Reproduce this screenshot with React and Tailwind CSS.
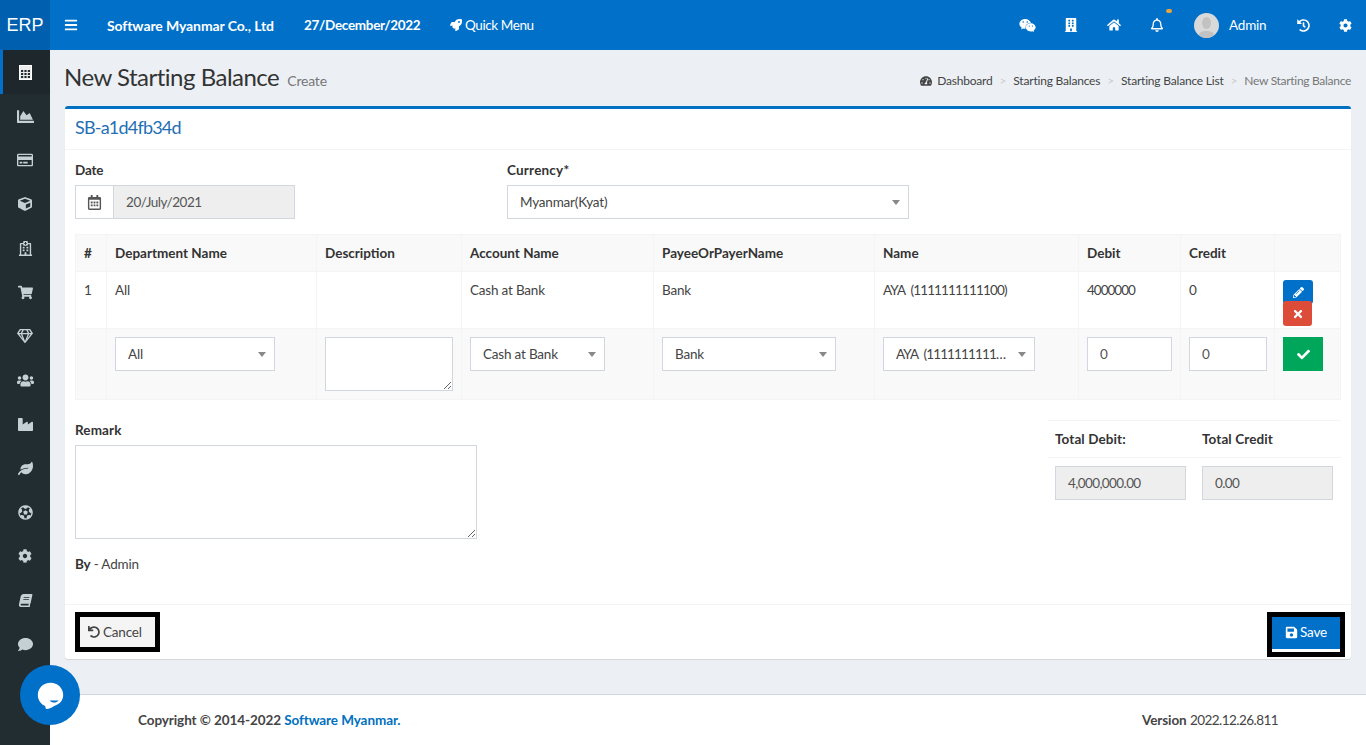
import React from "react";
import {
  FaBars, FaRocket, FaWeixin, FaBuilding, FaHome, FaRegBell, FaHistory, FaCog, FaTachometerAlt,
  FaChartArea, FaRegCreditCard, FaCube, FaRegHospital, FaShoppingCart, FaRegGem, FaUsers,
  FaIndustry, FaLeaf, FaFutbol, FaBook, FaComment, FaRegCalendarAlt, FaPencilAlt, FaTimes, FaCheck,
  FaSave, FaUndo,
} from "react-icons/fa";

const sideIcons = [
  [FaChartArea, 17, ""], [FaRegCreditCard, 16, ""], [FaCube, 14, ""], [FaRegHospital, 15, ""], [FaShoppingCart, 15, ""],
  [FaRegGem, 16, ""], [FaUsers, 17, ""], [FaIndustry, 15, ""], [FaLeaf, 15, ""], [FaFutbol, 15, ""], [FaCog, 14, ""],
  [FaBook, 13, "-skew-x-12"], [FaComment, 15, ""],
];

function Select({ value, className, textClass = "tracking-[-0.2px]" }) {
  return (
    <div className={"h-[34px] bg-white border border-[#d2d6de] flex items-center pl-3 pr-2 text-[#444] text-[13.5px] " + className}>
      <span className={"flex-1 whitespace-nowrap " + textClass}>{value}</span>
      <span className="ml-1 w-0 h-0 border-l-[4px] border-r-[4px] border-t-[5px] border-l-transparent border-r-transparent border-t-[#888] shrink-0" />
    </div>
  );
}

const th = "border border-[#f4f4f4] px-2 text-left align-middle font-bold text-[13.5px] tracking-[0px] text-[#333]";
const td = "border border-[#f4f4f4] px-2 pt-2 align-top text-[13.5px] tracking-[-0.2px] text-[#444]";

export default function App() {
  return (
    <div className="relative flex h-[745px] w-full overflow-hidden bg-[#ecf0f5] font-['Lato','Noto_Sans',sans-serif] text-[#333]">
      <aside className="w-[50px] shrink-0 bg-[#222d32] flex flex-col">
        <div className="h-[50px] bg-[#005fae] text-white text-[18px] flex items-center justify-center font-['Liberation_Sans',sans-serif]">ERP</div>
        <div className="h-[44px] bg-[#1e282c] border-l-[3px] border-[#0070c9] pr-[3px] flex items-center justify-center">
          <svg viewBox="0 0 13 15" className="w-[13px] h-[15px]">
            <rect x="0.500" y="0.500" width="12" height="14" fill="#ececec" stroke="#ffffff" />
            <rect x="2" y="5" width="2.200" height="2" fill="#222d32" />
            <rect x="5.400" y="5" width="2.200" height="2" fill="#222d32" />
            <rect x="8.800" y="5" width="2.200" height="2" fill="#222d32" />
            <rect x="2" y="8" width="2.200" height="2" fill="#222d32" />
            <rect x="5.400" y="8" width="2.200" height="2" fill="#222d32" />
            <rect x="8.800" y="8" width="2.200" height="2" fill="#222d32" />
            <rect x="2" y="11" width="2.200" height="2" fill="#222d32" />
            <rect x="5.400" y="11" width="2.200" height="2" fill="#222d32" />
            <rect x="8.800" y="11" width="2.200" height="2" fill="#222d32" />
          </svg>
        </div>
        {sideIcons.map(([I, s, c], i) => (
          <div key={i} className="h-[44px] flex items-center justify-center text-[#c5d0d5]">
            <I size={s} className={c} />
          </div>
        ))}
      </aside>

      <div className="flex-1 min-w-0 flex flex-col">
        <header className="h-[50px] bg-[#0070c9] text-white flex items-center shrink-0">
          <div className="w-[57px] flex justify-end pr-[29px]"><FaBars size={14} /></div>
          <span className="font-bold text-[14px] tracking-[-0.1px] w-[197px]">Software Myanmar Co., Ltd</span>
          <span className="font-bold text-[13.5px] tracking-[-0.3px] w-[146px]">27/December/2022</span>
          <span className="flex items-center gap-[3px] text-[13.5px] tracking-[-0.4px]"><FaRocket size={12} />Quick Menu</span>
          <div className="ml-auto flex items-center">
            <div className="w-[43px] flex justify-center"><FaWeixin size={17} /></div>
            <div className="w-[43px] flex justify-center"><FaBuilding size={14} /></div>
            <div className="w-[43px] flex justify-center"><FaHome size={14} /></div>
            <div className="relative w-[44px] flex justify-center">
              <FaRegBell size={14} />
              <span className="absolute -top-[9px] left-[31px] w-[6px] h-[4px] rounded-full bg-[#e8a33d]" />
            </div>
            <div className="flex items-center ml-[15px] w-[88px]">
              <span className="w-[25px] h-[25px] rounded-full bg-[#d9d9d9] overflow-hidden shrink-0">
                <svg viewBox="0 0 25 25" className="w-full h-full">
                  <ellipse cx="12.5" cy="10" rx="4.5" ry="6" fill="#c2c2c2" />
                  <path d="M4 25c0-6 4-7 8.500-7S21 19 21 25z" fill="#c2c2c2" />
                </svg>
              </span>
              <span className="ml-[10px] text-[13.5px] tracking-[-0.2px]">Admin</span>
            </div>
            <div className="w-[42px] flex justify-center"><FaHistory size={13} /></div>
            <div className="w-[42px] flex justify-center"><FaCog size={13} /></div>
          </div>
        </header>

        <main className="flex-1 min-h-0 pl-[15px] pr-[15px]">
          <div className="h-[56px] flex items-center justify-between">
            <div className="flex items-baseline -ml-[1px] pb-[2px]">
              <h1 className="text-[24px] tracking-[-0.5px] text-[#333] font-normal">New Starting Balance</h1>
              <span className="ml-[8px] text-[14px] tracking-[-0.2px] text-[#777]">Create</span>
            </div>
            <nav className="flex items-center mt-[5px] text-[12px] tracking-[-0.2px] text-[#444]">
              <FaTachometerAlt size={12} className="mr-[5px]" />
              <span>Dashboard</span>
              <span className="px-[7px] text-[#ccc]">&gt;</span>
              <span>Starting Balances</span>
              <span className="px-[7px] text-[#ccc]">&gt;</span>
              <span>Starting Balance List</span>
              <span className="px-[7px] text-[#ccc]">&gt;</span>
              <span className="text-[#777] tracking-[-0.3px]">New Starting Balance</span>
            </nav>
          </div>

          <section className="bg-white border-t-[3px] border-[#0070c0] rounded-[3px] shadow-[0_1px_1px_rgba(0,0,0,0.1)] h-[553px] flex flex-col">
            <div className="h-[41px] border-b border-[#f4f4f4] px-[10px] pb-[3px] flex items-center text-[18px] tracking-[-0.8px] text-[#1f6fb5]">SB-a1d4fb34d</div>
            <div className="flex-1 px-[10px] pt-[10px]">
              <div className="flex">
                <div className="w-[432px]">
                  <div className="font-bold text-[13.5px] tracking-[-0.2px] leading-[20px] mb-[5px]">Date</div>
                  <div className="flex w-[220px] h-[34px] border border-[#d2d6de]">
                    <div className="w-[38px] border-r border-[#d2d6de] flex items-center justify-center text-[#555]"><FaRegCalendarAlt size={15} /></div>
                    <div className="flex-1 bg-[#eee] flex items-center pl-3 text-[13.5px] tracking-[-0.45px] text-[#555]">20/July/2021</div>
                  </div>
                </div>
                <div className="w-[402px]">
                  <div className="font-bold text-[13.5px] tracking-[0.2px] leading-[20px] mb-[5px]">Currency*</div>
                  <Select value="Myanmar(Kyat)" className="w-full" />
                </div>
              </div>

              <table className="mt-[15px] w-[1265px] table-fixed border-collapse">
                <colgroup>
                  <col className="w-[31px]" /><col className="w-[210px]" /><col className="w-[145px]" /><col className="w-[192px]" />
                  <col className="w-[221px]" /><col className="w-[204px]" /><col className="w-[102px]" /><col className="w-[94px]" /><col className="w-[66px]" />
                </colgroup>
                <thead>
                  <tr className="h-[37px] bg-[#f9f9f9]">
                    <th className={th}>#</th><th className={th}>Department Name</th><th className={th}>Description</th><th className={th}>Account Name</th>
                    <th className={th}>PayeeOrPayerName</th><th className={th}>Name</th><th className={th}>Debit</th><th className={th}>Credit</th><th className={th}></th>
                  </tr>
                </thead>
                <tbody>
                  <tr className="h-[57px]">
                    <td className={td}>1</td><td className={td}>All</td><td className={td}></td><td className={td}>Cash at Bank</td>
                    <td className={td}>Bank</td><td className={td}><span className="tracking-[-0.85px] [word-spacing:3px]">AYA (1111111111100)</span></td><td className={td}><span className="tracking-[-1px]">4000000</span></td><td className={td}>0</td>
                    <td className={td}>
                      <div className="flex flex-col items-start">
                        <div className="w-[30px] h-[24px] rounded-[3px] bg-[#0070c9] text-white flex items-center justify-center"><FaPencilAlt size={11} /></div>
                        <div className="w-[29px] h-[25px] -mt-[3px] rounded-[3px] bg-[#dd4b39] text-white flex items-center justify-center"><FaTimes size={12} /></div>
                      </div>
                    </td>
                  </tr>
                  <tr className="h-[71px] bg-[#f9f9f9]">
                    <td className={td}></td>
                    <td className={td}><Select value="All" className="w-[160px]" /></td>
                    <td className={td}><textarea className="block w-[128px] h-[54px] bg-white border border-[#d2d6de]" /></td>
                    <td className={td}><Select value="Cash at Bank" className="w-[135px]" /></td>
                    <td className={td}><Select value="Bank" className="w-[174px]" /></td>
                    <td className={td}><Select value="AYA (1111111111…" className="w-[152px]" textClass="tracking-[-0.85px] [word-spacing:3px]" /></td>
                    <td className={td}><div className="w-[85px] h-[34px] bg-white border border-[#d2d6de] flex items-center pl-3 text-[#555]">0</div></td>
                    <td className={td}><div className="w-[78px] h-[34px] bg-white border border-[#d2d6de] flex items-center pl-3 text-[#555]">0</div></td>
                    <td className={td}><div className="w-[40px] h-[34px] bg-[#00a65a] text-white flex items-center justify-center"><FaCheck size={13} /></div></td>
                  </tr>
                </tbody>
              </table>

              <div className="flex justify-between mt-[20px]">
                <div className="w-[402px]">
                  <div className="font-bold text-[13.5px] tracking-[0.1px] leading-[20px] mb-[5px]">Remark</div>
                  <textarea className="block w-[402px] h-[94px] bg-white border border-[#d2d6de]" />
                  <div className="mt-[15px] leading-[20px] text-[13.5px] tracking-[-0.2px] text-[#444]"><b className="text-[#333]">By</b> - Admin</div>
                </div>
                <div className="w-[293px]">
                  <div className="h-[38px] border-y border-[#f4f4f4] flex items-center pl-[7px] font-bold text-[13.5px] tracking-[0.1px]">
                    <span className="w-[147px]">Total Debit:</span><span>Total Credit</span>
                  </div>
                  <div className="flex gap-[16px] pl-[7px] pt-[8px]">
                    <div className="w-[131px] h-[34px] bg-[#eee] border border-[#d2d6de] flex items-center pl-3 text-[13.5px] tracking-[-0.6px] text-[#555]">4,000,000.00</div>
                    <div className="w-[131px] h-[34px] bg-[#eee] border border-[#d2d6de] flex items-center pl-3 text-[13.5px] tracking-[-0.6px] text-[#555]">0.00</div>
                  </div>
                </div>
              </div>
            </div>
            <div className="h-[55px] border-t border-[#f4f4f4] pl-[10px] pr-[6px] flex items-start justify-between pt-[7px]">
              <div className="w-[85px] h-[40px] border-[5px] border-black bg-[#f4f4f4] flex items-center pl-[8px] gap-[3px] text-[13.5px] tracking-[-0.2px] text-[#444]"><FaUndo size={12} />Cancel</div>
              <div className="w-[78px] h-[45px] border-[5px] border-black bg-white">
                <div className="h-[32px] pb-[2px] bg-[#0070c9] text-white flex items-center justify-center gap-[2px] text-[13.5px] tracking-[-0.2px]"><FaSave size={13} />Save</div>
              </div>
            </div>
          </section>
        </main>

        <footer className="h-[51px] shrink-0 bg-white border-t border-[#d2d6de] flex items-center justify-between pl-[88px] pr-[88px] text-[13.5px] tracking-[-0.08px] text-[#444]">
          <span className="font-bold">Copyright © 2014-2022 <span className="text-[#0070c0]">Software Myanmar</span><span className="text-[#0070c0]">.</span></span>
          <span><b>Version</b> <span className="tracking-[-0.55px]">2022.12.26.811</span></span>
        </footer>
      </div>

      <div className="absolute left-[20px] top-[665px] w-[60px] h-[60px] rounded-full bg-[#0070c9] flex items-center justify-center">
        <svg viewBox="0 0 32 32" className="w-[29px] h-[29px]">
          <path d="M16 2C8 2 2 8 2 15.500c0 6 4 10.500 8 12.200l1 3.300c4-.5 7-2 9-3.500 6-1.500 10-6 10-12C30 8 24 2 16 2z" fill="#fff" />
          <path d="M15 21.500c3 3 7 3 10 0z" fill="#0070c9" />
        </svg>
      </div>
    </div>
  );
}
